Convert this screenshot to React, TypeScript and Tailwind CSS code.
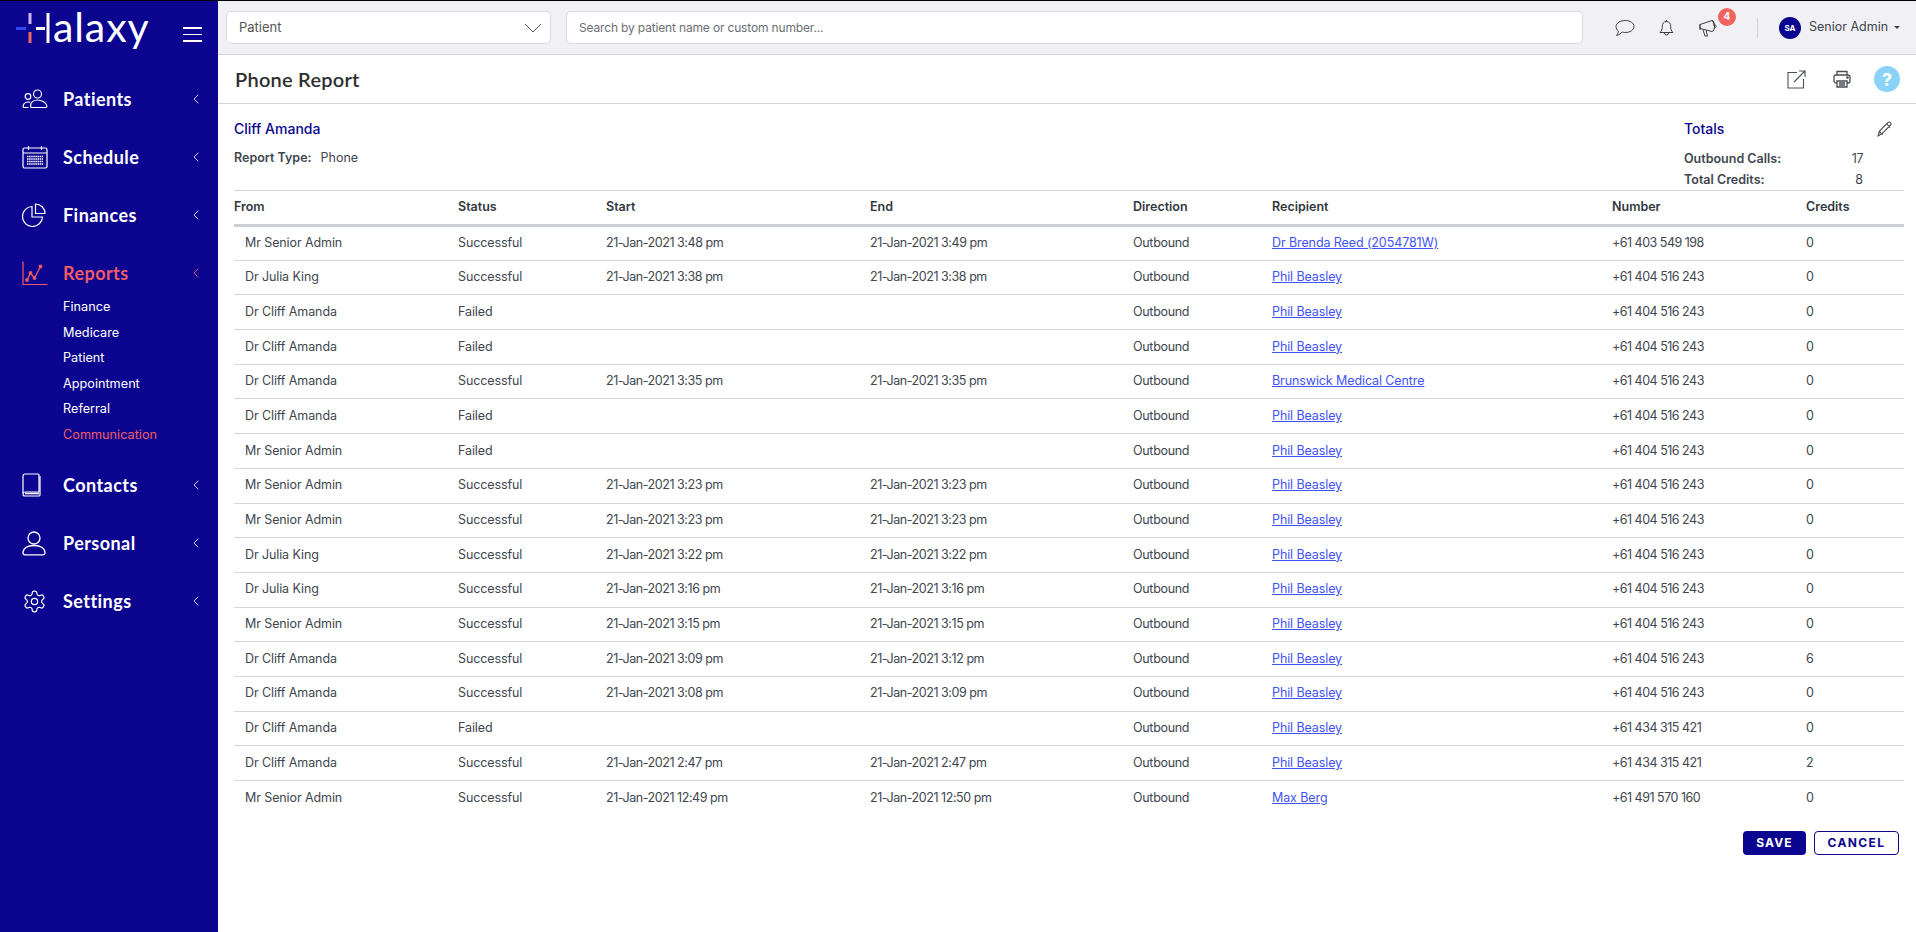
import React from "react";
import { ChevronLeft } from "lucide-react";

const rows = [
  ["Mr Senior Admin", "Successful", "21-Jan-2021 3:48 pm", "21-Jan-2021 3:49 pm", "Dr Brenda Reed (2054781W)", "+61 403 549 198", "0"],
  ["Dr Julia King", "Successful", "21-Jan-2021 3:38 pm", "21-Jan-2021 3:38 pm", "Phil Beasley", "+61 404 516 243", "0"],
  ["Dr Cliff Amanda", "Failed", "", "", "Phil Beasley", "+61 404 516 243", "0"],
  ["Dr Cliff Amanda", "Failed", "", "", "Phil Beasley", "+61 404 516 243", "0"],
  ["Dr Cliff Amanda", "Successful", "21-Jan-2021 3:35 pm", "21-Jan-2021 3:35 pm", "Brunswick Medical Centre", "+61 404 516 243", "0"],
  ["Dr Cliff Amanda", "Failed", "", "", "Phil Beasley", "+61 404 516 243", "0"],
  ["Mr Senior Admin", "Failed", "", "", "Phil Beasley", "+61 404 516 243", "0"],
  ["Mr Senior Admin", "Successful", "21-Jan-2021 3:23 pm", "21-Jan-2021 3:23 pm", "Phil Beasley", "+61 404 516 243", "0"],
  ["Mr Senior Admin", "Successful", "21-Jan-2021 3:23 pm", "21-Jan-2021 3:23 pm", "Phil Beasley", "+61 404 516 243", "0"],
  ["Dr Julia King", "Successful", "21-Jan-2021 3:22 pm", "21-Jan-2021 3:22 pm", "Phil Beasley", "+61 404 516 243", "0"],
  ["Dr Julia King", "Successful", "21-Jan-2021 3:16 pm", "21-Jan-2021 3:16 pm", "Phil Beasley", "+61 404 516 243", "0"],
  ["Mr Senior Admin", "Successful", "21-Jan-2021 3:15 pm", "21-Jan-2021 3:15 pm", "Phil Beasley", "+61 404 516 243", "0"],
  ["Dr Cliff Amanda", "Successful", "21-Jan-2021 3:09 pm", "21-Jan-2021 3:12 pm", "Phil Beasley", "+61 404 516 243", "6"],
  ["Dr Cliff Amanda", "Successful", "21-Jan-2021 3:08 pm", "21-Jan-2021 3:09 pm", "Phil Beasley", "+61 404 516 243", "0"],
  ["Dr Cliff Amanda", "Failed", "", "", "Phil Beasley", "+61 434 315 421", "0"],
  ["Dr Cliff Amanda", "Successful", "21-Jan-2021 2:47 pm", "21-Jan-2021 2:47 pm", "Phil Beasley", "+61 434 315 421", "2"],
  ["Mr Senior Admin", "Successful", "21-Jan-2021 12:49 pm", "21-Jan-2021 12:50 pm", "Max Berg", "+61 491 570 160", "0"],
];

const subItems = ["Finance", "Medicare", "Patient", "Appointment", "Referral", "Communication"];

const PatientsIcon = () => (
  <svg width="26" height="20" viewBox="0 0 26 20" fill="none" stroke="currentColor" strokeWidth="1.2">
    <circle cx="15.5" cy="5" r="4" />
    <path d="M8.5 17.5c0-4 3-6.5 7-6.5s9 2.500 9.500 6c0 1-.5 1.500-1.500 1.500H10c-1 0-1.500-.5-1.500-1z" />
    <circle cx="6" cy="7.500" r="2.800" />
    <path d="M6.500 18.500H2.500c-1 0-1.500-.5-1.300-1.500.4-2.500 2.300-4 5-4 .8 0 1.500.1 2.100.4" />
  </svg>
);

const ScheduleIcon = () => (
  <svg width="26" height="24" viewBox="0 0 26 24" fill="none" stroke="currentColor" strokeWidth="1.2">
    <rect x="1" y="3" width="24" height="20" rx="1.500" />
    <path d="M1 8h24M6.500 1v4M19.500 1v4" />
    <path d="M5 11.500h16M5 14h16M5 16.500h16M5 19h16" strokeWidth="1.500" strokeDasharray="1.500 .6" />
  </svg>
);

const FinancesIcon = () => (
  <svg width="24" height="24" viewBox="0 0 24 24" fill="none" stroke="currentColor" strokeWidth="1.2">
    <path d="M10 3.500a10 10 0 1 0 10.500 10.500H10z" />
    <path d="M13.500 1a9.500 9.500 0 0 1 9.500 9.500h-9.500z" />
  </svg>
);

const ReportsIcon = () => (
  <svg width="26" height="25" viewBox="0 0 26 25" fill="none" stroke="currentColor" strokeWidth="1.2">
    <path d="M1 0.500V23.500H25.500" />
    <path d="M5 19l3.500-7 4 5 6-11.500" strokeWidth="1.300" />
    <circle cx="5" cy="19" r="1.300" fill="currentColor" />
    <circle cx="8.500" cy="12" r="1.300" fill="currentColor" />
    <circle cx="12.500" cy="17" r="1.300" fill="currentColor" />
    <circle cx="18.500" cy="5.500" r="1.300" fill="currentColor" />
  </svg>
);

const ContactsIcon = () => (
  <svg width="20" height="24" viewBox="0 0 20 24" fill="none" stroke="currentColor" strokeWidth="1.2">
    <path d="M3 1h13c.6 0 1 .4 1 1v17H3c-1.200 0-2 .8-2 2V3c0-1.200.8-2 2-2z" />
    <path d="M1 21c0 1.200.8 2 2 2h14c.6 0 1-.4 1-1V3" />
    <path d="M3 20.500h14" strokeWidth="1.600" />
  </svg>
);

const PersonalIcon = () => (
  <svg width="24" height="25" viewBox="0 0 24 25" fill="none" stroke="currentColor" strokeWidth="1.300">
    <circle cx="12" cy="7" r="6" />
    <path d="M1 22c0-4.500 4-7.500 11-7.500s11 3 11 7.500c0 1.200-.7 1.800-1.800 1.800H2.800C1.700 23.800 1 23.200 1 22z" />
  </svg>
);

const SettingsIcon = () => (
  <svg width="25" height="25" viewBox="0 0 24 24" fill="none" stroke="currentColor" strokeWidth="1.150">
    <path d="M12.220 2h-.44a2 2 0 0 0-2 2v.18a2 2 0 0 1-1 1.730l-.43.250a2 2 0 0 1-2 0l-.15-.08a2 2 0 0 0-2.730.730l-.22.380a2 2 0 0 0 .73 2.730l.15.100a2 2 0 0 1 1 1.720v.510a2 2 0 0 1-1 1.740l-.15.090a2 2 0 0 0-.73 2.730l.22.380a2 2 0 0 0 2.730.730l.15-.08a2 2 0 0 1 2 0l.43.250a2 2 0 0 1 1 1.730V20a2 2 0 0 0 2 2h.44a2 2 0 0 0 2-2v-.18a2 2 0 0 1 1-1.730l.43-.250a2 2 0 0 1 2 0l.15.080a2 2 0 0 0 2.730-.730l.22-.390a2 2 0 0 0-.73-2.730l-.15-.080a2 2 0 0 1-1-1.740v-.500a2 2 0 0 1 1-1.740l.15-.090a2 2 0 0 0 .73-2.730l-.22-.380a2 2 0 0 0-2.730-.730l-.15.080a2 2 0 0 1-2 0l-.43-.250a2 2 0 0 1-1-1.730V4a2 2 0 0 0-2-2z" />
    <circle cx="12" cy="12" r="3" />
  </svg>
);

const NavItem = ({ icon, label, active }: { icon: React.ReactNode; label: string; active?: boolean }) => (
  <div className={`flex items-center h-[58px] pl-[22px] pr-[14px] ${active ? "text-[#ef5a66]" : "text-white"}`}>
    <span className="w-[41px] flex justify-start">{icon}</span>
    <span className="flex-1 text-[18px] font-bold tracking-[0.45px] font-['Lato',sans-serif]">{label}</span>
    <ChevronLeft size={16} strokeWidth={1.4} className={active ? "text-[#ef5a66]" : "text-[#d9d8f2]"} />
  </div>
);

const Sidebar = () => (
  <aside className="w-[218px] shrink-0 bg-[#0b058f] flex flex-col">
    <div className="h-[69px] flex items-start pt-[12px] pl-[16px] relative">
      <svg width="34" height="30" viewBox="0 0 34 30" strokeWidth="3" className="shrink-0">
        <path d="M0 15.500H10" stroke="#3347f0" />
        <path d="M14 0V11" stroke="#d3b4f5" />
        <path d="M14 19V30" stroke="#ef6a62" />
        <path d="M20 15.500H29" stroke="#ffffff" />
        <path d="M32 0V30" stroke="#ffffff" />
      </svg>
      <span className="text-white text-[41px] font-normal font-['Lato',sans-serif] leading-none ml-[3px] -mt-[7px] tracking-[0.9px]">alaxy</span>
      <div className="absolute left-[183px] top-[26px] w-[19px] flex flex-col gap-[5px]">
        <div className="h-[1.5px] bg-white" />
        <div className="h-[1.5px] bg-white" />
        <div className="h-[1.5px] bg-white" />
      </div>
    </div>
    <NavItem icon={<PatientsIcon />} label="Patients" />
    <NavItem icon={<ScheduleIcon />} label="Schedule" />
    <NavItem icon={<FinancesIcon />} label="Finances" />
    <NavItem icon={<ReportsIcon />} label="Reports" active />
    <div className="flex flex-col pl-[63px] -mt-[8px] mb-[9px]">
      {subItems.map((s) => (
        <div key={s} className={`h-[25.500px] flex items-center text-[12.700px] ${s === "Communication" ? "text-[#ef5a66]" : "text-white"}`}>
          {s}
        </div>
      ))}
    </div>
    <NavItem icon={<ContactsIcon />} label="Contacts" />
    <NavItem icon={<PersonalIcon />} label="Personal" />
    <NavItem icon={<SettingsIcon />} label="Settings" />
  </aside>
);

const TopBar = () => (
  <header className="h-[54px] shrink-0 bg-[#f0f0f5] border-b border-[#d2d5da] flex items-center pl-[8px] text-[#3f4650]">
    <div className="w-[325px] shrink-0 h-[33px] bg-white border border-[#d8dade] rounded-[5px] flex items-center justify-between pl-[12px] pr-[8px] text-[13px] text-[#555]">
      <span>Patient</span>
      <svg width="18" height="10" viewBox="0 0 18 10" fill="none" stroke="#555" strokeWidth="1">
        <path d="M1 1l8 8 8-8" />
      </svg>
    </div>
    <div className="ml-[15px] w-[1017px] shrink-0 h-[33px] bg-white border border-[#d8dade] rounded-[5px] flex items-center pl-[12px] text-[12px] tracking-[-0.16px] text-[#6b6f75]">
      Search by patient name or custom number...
    </div>
    <svg className="ml-[32px] shrink-0" width="20" height="18" viewBox="0 0 20 18" fill="none" stroke="#3a3f46" strokeWidth="1">
      <path d="M10.500 1.500c4.500 0 8.500 2.500 8.500 6s-4 6-8.500 6c-1.200 0-2.300-.2-3.300-.5-1.100 1.300-3 2.800-5.700 3.500 1-1.200 1.700-2.500 1.900-4.500C2 11 1 9.300 1 7.500c0-3.500 4.500-6 9.500-6z" />
    </svg>
    <svg className="ml-[24px] shrink-0" width="15" height="18" viewBox="0 0 15 18" fill="none" stroke="#3a3f46" strokeWidth="1">
      <path d="M7.500 2.500c3 0 4.200 2.300 4.200 5 0 3 .8 4.500 2.300 6H1c1.500-1.500 2.300-3 2.300-6 0-2.700 1.200-5 4.200-5zM7.500 1v1.500M5.500 14a2 2 0 0 0 4 0" />
    </svg>
    <div className="ml-[25px] relative shrink-0">
      <svg width="20" height="18" viewBox="0 0 20 18" fill="none" stroke="#3a3f46" strokeWidth="1">
        <path d="M1 5.500l12-4c1.500 0 2.500 2.800 2.500 5.500s-1 5.500-2.500 5.500l-12-3zM1 5v6M13 1.500c1.300.5 2 3 2 5.500M4 11l2 6h2.500L7 11.500M15.500 5.500c1 .2 1.500.8 1.500 1.800s-.5 1.600-1.500 1.800" />
      </svg>
      <div className="absolute -top-[11px] left-[19px] w-[18px] h-[18px] rounded-full bg-[#f0635f] text-white text-[10px] font-bold flex items-center justify-center">4</div>
    </div>
    <div className="ml-[38px] w-px h-[20px] bg-[#d0d2d8] shrink-0" />
    <div className="ml-[21px] w-[22px] h-[22px] rounded-full bg-[#0b058f] text-white text-[8px] font-bold flex items-center justify-center shrink-0">SA</div>
    <span className="ml-[8px] text-[12.500px] text-[#3f4650] whitespace-nowrap">Senior Admin</span>
    <span className="ml-[6px] w-0 h-0 shrink-0 border-l-[3.500px] border-r-[3.500px] border-t-[3.500px] border-l-transparent border-r-transparent border-t-[#3f4650]" />
  </header>
);

const TitleBar = () => (
  <div className="h-[49px] shrink-0 border-b border-[#d2d5da] flex items-center pl-[17px] pr-[16px]">
    <h1 className="flex-1 text-[20px] font-semibold tracking-[0.25px] text-[#2e2e2e] font-['Lato',sans-serif]">Phone Report</h1>
    <svg width="19" height="19" viewBox="0 0 19 19" fill="none" stroke="#4a4f55" strokeWidth="1.100">
      <path d="M10 2.500H1v15.500h15.500V9" />
      <path d="M7 12L18 1M12 1h6v6" />
    </svg>
    <svg className="ml-[27px]" width="18" height="18" viewBox="0 0 18 18" fill="none" stroke="#4a4f55" strokeWidth="1.300">
      <path d="M4 5V1.500h10V5" />
      <rect x="1" y="5" width="16" height="8" rx="2" />
      <path d="M4 11h10v6H4zM6 13h6M6 15h6" fill="#fff" />
      <circle cx="14.500" cy="7.500" r=".7" fill="#4a4f55" />
    </svg>
    <div className="ml-[23px] w-[26px] h-[26px] rounded-full bg-[#8ad3f7] text-white text-[18px] font-bold flex items-center justify-center">?</div>
  </div>
);

const Th = ({ children }: { children: React.ReactNode }) => (
  <th className="text-left font-semibold p-0">{children}</th>
);

const ReportTable = () => (
  <table className="w-full table-fixed border-collapse text-[12.500px] tracking-[-0.1px] text-[#40464e]">
    <colgroup>
      <col className="w-[224px]" />
      <col className="w-[148px]" />
      <col className="w-[264px]" />
      <col className="w-[263px]" />
      <col className="w-[139px]" />
      <col className="w-[340px]" />
      <col className="w-[194px]" />
      <col className="w-[98px]" />
    </colgroup>
    <thead>
      <tr className="h-[35px] border-t border-b-[3px] border-t-[#d2d5da] border-b-[#ccd0d6] text-[#33383e] tracking-[0px]">
        <Th>From</Th>
        <Th>Status</Th>
        <Th>Start</Th>
        <Th>End</Th>
        <Th>Direction</Th>
        <Th>Recipient</Th>
        <Th>Number</Th>
        <Th>Credits</Th>
      </tr>
    </thead>
    <tbody>
      {rows.map((r, i) => (
        <tr key={i} className="h-[34.700px] border-b border-[#d2d5da] last:border-b-0">
          <td className="p-0 pl-[11px]">{r[0]}</td>
          <td className="p-0">{r[1]}</td>
          <td className="p-0 tracking-[-0.45px]">{r[2]}</td>
          <td className="p-0 tracking-[-0.45px]">{r[3]}</td>
          <td className="p-0 tracking-[-0.3px]">Outbound</td>
          <td className="p-0">
            <a className="text-[#3f52f5] underline">{r[4]}</a>
          </td>
          <td className="p-0 tracking-[-0.5px]">{r[5]}</td>
          <td className="p-0">{r[6]}</td>
        </tr>
      ))}
    </tbody>
  </table>
);

const App = () => {
  return (
    <div className="w-full h-screen overflow-hidden flex border-t border-black bg-white font-['Inter',sans-serif]">
      <Sidebar />
      <main className="flex-1 flex flex-col min-w-0">
        <TopBar />
        <TitleBar />
        <div className="pl-[16px] pr-[12px]">
          <div className="h-[86px] flex justify-between">
            <div className="pt-[15px]">
              <div className="text-[14px] font-medium text-[#0b058f] leading-[20px]">Cliff Amanda</div>
              <div className="mt-[9px] text-[12.500px] text-[#40464e] leading-[20px]">
                <span className="font-semibold">Report Type:</span>
                <span className="ml-[9px]">Phone</span>
              </div>
            </div>
            <div className="w-[220px] pt-[15px] pr-[8px]">
              <div className="flex items-center justify-between h-[20px]">
                <span className="text-[14px] leading-[20px] font-medium text-[#0b058f] -mt-[1px]">Totals</span>
                <svg className="mr-[3px]" width="16" height="16" viewBox="0 0 14 14" fill="none" stroke="#4a4f55" strokeWidth="1">
                  <path d="M1 13l1-4 7.500-7.500c.8-.8 1.700-.8 2.300-.1.700.6.700 1.500-.1 2.300L4.200 11.200zM8.500 2.500l3 3M2 9l3 3" />
                </svg>
              </div>
              <div className="mt-[9px] flex text-[12.500px] leading-[21px] text-[#40464e]">
                <span className="font-semibold w-[165px]">Outbound Calls:</span>
                <span className="w-[14px] text-right tracking-[-0.5px]">17</span>
              </div>
              <div className="flex text-[12.500px] leading-[21px] text-[#40464e]">
                <span className="font-semibold w-[165px]">Total Credits:</span>
                <span className="w-[14px] text-right">8</span>
              </div>
            </div>
          </div>
          <ReportTable />
          <div className="mt-[16px] flex justify-end gap-[8px] pr-[5px]">
            <button className="w-[63px] h-[24px] rounded-[4px] bg-[#0b058f] text-white text-[12px] font-bold tracking-[1.200px]">SAVE</button>
            <button className="w-[85px] h-[24px] rounded-[4px] border border-[#0b058f] bg-white text-[#0b058f] text-[12px] font-bold tracking-[1.400px]">CANCEL</button>
          </div>
        </div>
      </main>
    </div>
  );
};

export default App;
